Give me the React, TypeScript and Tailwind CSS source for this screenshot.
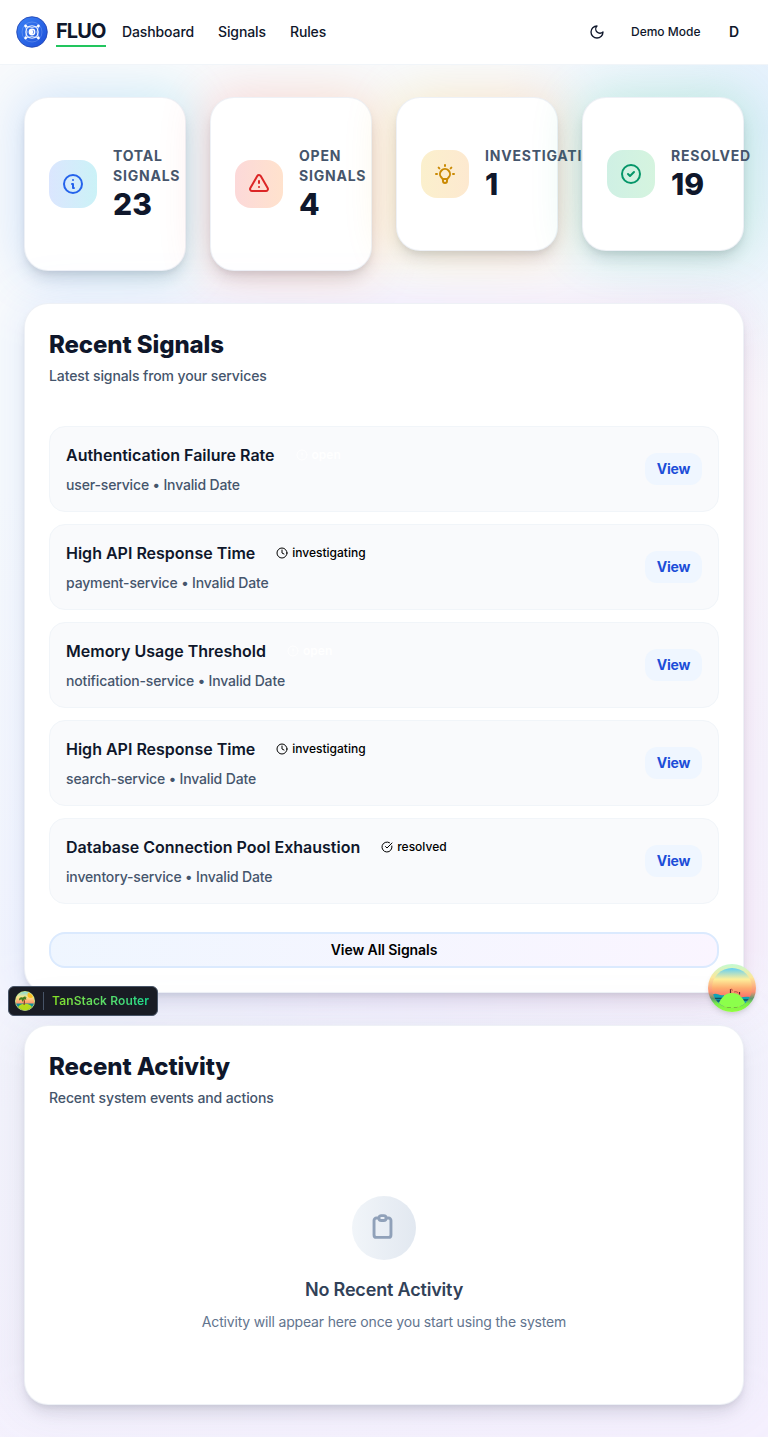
import React from "react";
import { Clock, CircleAlert, CircleCheckBig } from "lucide-react";

const stats = [
  {
    label: "Total Signals", value: "23", icon: "M13 16h-1v-4h-1m1-4h.01M21 12a9 9 0 11-18 0 9 9 0 0118 0z",
    color: "text-[#2563eb]", tile: "from-[#dbe6fe] to-[#cbf2f7]", glow: "from-[#3b82f6] to-[#06b6d4]",
  },
  {
    label: "Open Signals", value: "4", icon: "M12 9v2m0 4h.01m-6.938 4h13.856c1.54 0 2.502-1.667 1.732-3L13.732 4c-.77-1.333-2.694-1.333-3.464 0L3.34 16c-.77 1.333.192 3 1.732 3z",
    color: "text-[#dc2626]", tile: "from-[#fcd9d9] to-[#ffe2cd]", glow: "from-[#ef4444] to-[#f97316]",
  },
  {
    label: "Investigating", value: "1", icon: "M9.663 17h4.673M12 3v1m6.364 1.636l-.707.707M21 12h-1M4 12H3m3.343-5.657l-.707-.707m2.828 9.9a5 5 0 117.072 0l-.548.547A3.374 3.374 0 0014 18.469V19a2 2 0 11-4 0v-.531c0-.895-.356-1.754-.988-2.386l-.548-.547z",
    color: "text-[#ca8a04]", tile: "from-[#fbf0cd] to-[#fde9d0]", glow: "from-[#eab308] to-[#f97316]",
  },
  {
    label: "Resolved", value: "19", icon: "M9 12l2 2 4-4m6 2a9 9 0 11-18 0 9 9 0 0118 0z",
    color: "text-[#059669]", tile: "from-[#cff0e4] to-[#d5f4df]", glow: "from-[#10b981] to-[#22c55e]",
  },
];

const signals = [
  { title: "Authentication Failure Rate", status: "open", service: "user-service" },
  { title: "High API Response Time", status: "investigating", service: "payment-service" },
  { title: "Memory Usage Threshold", status: "open", service: "notification-service" },
  { title: "High API Response Time", status: "investigating", service: "search-service" },
  { title: "Database Connection Pool Exhaustion", status: "resolved", service: "inventory-service" },
];

const statusIcons = { open: CircleAlert, investigating: Clock, resolved: CircleCheckBig };

function Logo() {
  return (
    <svg className="size-8" viewBox="0 0 32 32" fill="none">
      <defs>
        <linearGradient id="logo" x1="0" y1="0" x2="1" y2="1">
          <stop stopColor="#3b82f6" />
          <stop offset="1" stopColor="#1d4ed8" />
        </linearGradient>
      </defs>
      <circle cx="16" cy="16" r="15.3" fill="url(#logo)" stroke="#1e40af" strokeWidth=".8" />
      <circle cx="16" cy="16" r="10" stroke="#fff" strokeOpacity=".3" strokeWidth=".6" />
      <circle cx="16" cy="16" r="6.3" stroke="#fff" strokeOpacity=".85" strokeWidth="1.1" />
      <path d="M9.5 10q6.5 3 13 0M9.5 22q6.5-3 13 0M9.5 10q3 6 0 12M22.5 10q-3 6 0 12" stroke="#fff" strokeOpacity=".75" strokeWidth="1" />
      <g fill="#fff">
        <circle cx="9.6" cy="10" r="1.4" /><circle cx="22.4" cy="10" r="1.4" />
        <circle cx="9.6" cy="22" r="1.4" /><circle cx="22.4" cy="22" r="1.4" />
        <circle cx="16" cy="16" r="3.4" />
      </g>
      <path d="M17 14.2a2.6 2.6 0 0 1 0 3.6 3 3 0 0 0 0-3.6" fill="#2563eb" stroke="#2563eb" strokeWidth=".4" />
    </svg>
  );
}

function SmallIsland() {
  return (
    <svg className="size-5" viewBox="0 0 20 20">
      <defs>
        <linearGradient id="sky" x1="0" y1="0" x2="0" y2="1">
          <stop stopColor="#6cd6e8" /><stop offset=".3" stopColor="#fde68a" /><stop offset=".7" stopColor="#fb7b62" />
        </linearGradient>
        <clipPath id="smallclip"><circle cx="10" cy="10" r="9.2" /></clipPath>
      </defs>
      <circle cx="10" cy="10" r="10" fill="#c9e88a" />
      <g clipPath="url(#smallclip)">
        <rect width="20" height="20" fill="url(#sky)" />
        <circle cx="15.5" cy="4" r="3" fill="#fbbf24" />
        <rect y="12.5" width="20" height="7.5" fill="#0e8f9b" />
        <ellipse cx="10" cy="17" rx="7" ry="4.2" fill="#b5d91c" />
        <path d="M8.8 7.5q1 3 .3 6.5" stroke="#8b3f24" strokeWidth="1.2" fill="none" />
        <path d="M4 9.5Q4 5.5 8 6.6 9.5 4.4 12 6.5l-1.5 0q1 1 .7 2.4L9.3 7.8 7.4 11 6.4 8.3Z" fill="#3f7d20" />
      </g>
    </svg>
  );
}

function LargeIsland() {
  return (
    <svg className="size-12" viewBox="0 0 48 48">
      <defs>
        <linearGradient id="ring" x1="0" y1="0" x2="0" y2="1">
          <stop stopColor="#c3fbd2" /><stop offset=".28" stopColor="#fce79a" /><stop offset=".58" stopColor="#fb8f72" />
          <stop offset=".72" stopColor="#5c9a70" /><stop offset=".83" stopColor="#78ef48" /><stop offset="1" stopColor="#91ff3d" />
        </linearGradient>
        <linearGradient id="dusk" x1="0" y1="0" x2="0" y2="1">
          <stop stopColor="#62cff5" /><stop offset=".28" stopColor="#fdef9b" /><stop offset=".5" stopColor="#fdae70" /><stop offset=".75" stopColor="#fb6d68" />
        </linearGradient>
        <clipPath id="bigclip"><circle cx="24" cy="24" r="20" /></clipPath>
      </defs>
      <circle cx="24" cy="24" r="24" fill="url(#ring)" />
      <g clipPath="url(#bigclip)">
        <rect x="4" y="4" width="40" height="40" fill="url(#dusk)" />
        <path d="M4 31q3-2 6-.7t6 .7v13H4zM32 34q4-2 12-1v11H32z" fill="#0ea5b5" />
        <path d="M4 34.5h12M5 37h10M33 36h11" stroke="#134e5e" strokeWidth="1.3" />
        <path d="M9 44c3-9 7-15 15-15s12 6 15 15z" fill="#8cff4b" />
        <path d="M12 41.8q12 4 24 0" stroke="#377e2b" strokeWidth=".6" strokeDasharray="4 3" fill="none" />
        <path d="M22.5 25v4M31.5 28v2.5" stroke="#5c2530" strokeWidth="1.2" />
        <path d="M22 26q1-2 3 .5M26 28q2-1 4 .5" stroke="#ad3f3f" strokeWidth=".8" fill="none" />
      </g>
    </svg>
  );
}

function Panel({ title, subtitle, className, glow, children }: { title: string; subtitle: string; className: string; glow: string; children: React.ReactNode }) {
  return (
    <section className={className + " relative"}>
      <div className={"absolute -inset-1 rounded-3xl bg-linear-to-r blur-xl " + glow} />
      <div className="relative h-full rounded-3xl border border-slate-200/60 bg-white p-6 shadow-[0_10px_15px_-3px_rgba(15,23,42,.1),0_4px_6px_-2px_rgba(15,23,42,.08)]">
        <h2 className="pt-px text-2xl leading-8 font-extrabold tracking-[-0.004em] text-slate-900">{title}</h2>
        <p className="mt-[5px] text-sm leading-5 font-medium tracking-[-0.008em] text-slate-600">{subtitle}</p>
        {children}
      </div>
    </section>
  );
}

export default function App() {
  return (
    <div className="relative h-[1437px] w-full overflow-hidden bg-[radial-gradient(circle_at_100%_130px,#e1effd_0px,transparent_270px),linear-gradient(165deg,#f8fafc_0%,#f8fafc_30%,#f4f5fd_60%,#f5f0fe_100%)] font-['Inter',sans-serif] text-slate-900">
      <header className="relative z-10 flex h-[65px] items-center border-b border-slate-100 bg-white pr-[29px] pl-4">
        <Logo />
        <div className="ml-2 w-[50px] border-b-2 border-[#22c55e] text-xl leading-7 font-bold tracking-[-0.045em]">FLUO</div>
        <nav className="ml-4 flex gap-6 text-sm font-medium tracking-[-0.008em]">
          <a>Dashboard</a>
          <a>Signals</a>
          <a>Rules</a>
        </nav>
        <div className="ml-auto flex items-center">
          <svg className="size-4" viewBox="0 0 24 24" fill="none" stroke="currentColor" strokeWidth="2" strokeLinecap="round" strokeLinejoin="round">
            <path d="M12 3a6 6 0 0 0 9 9 9 9 0 1 1-9-9Z" />
          </svg>
          <span className="ml-[26px] w-[69px] text-xs font-medium whitespace-nowrap">Demo Mode</span>
          <span className="ml-[29px] w-2.5 text-sm font-semibold">D</span>
        </div>
      </header>

      <main className="px-6 pt-8">
        <div className="grid grid-cols-4 items-start gap-6">
          {stats.map((s) => (
            <div key={s.label} className="relative">
              <div className={"absolute -inset-1 rounded-3xl bg-linear-to-r opacity-20 blur-xl " + s.glow} />
              <div className="relative flex items-center gap-4 rounded-3xl border border-slate-200/60 bg-white px-6 py-12 shadow-[0_10px_15px_-3px_rgba(15,23,42,.12),0_4px_6px_-2px_rgba(15,23,42,.08)]">
                <div className={"flex size-12 shrink-0 items-center justify-center rounded-2xl bg-linear-to-r " + s.tile + " " + s.color}>
                  <svg className="size-6" viewBox="0 0 24 24" fill="none" stroke="currentColor" strokeWidth="2" strokeLinecap="round" strokeLinejoin="round">
                    <path d={s.icon} />
                  </svg>
                </div>
                <div className="min-w-0">
                  <p className="text-sm leading-5 font-bold tracking-[0.056em] text-slate-600 uppercase">{s.label}</p>
                  <p className="text-3xl leading-9 font-extrabold">{s.value}</p>
                </div>
              </div>
            </div>
          ))}
        </div>

        <Panel title="Recent Signals" subtitle="Latest signals from your services" className="mt-8 h-[690px]" glow="from-blue-500/10 via-purple-500/10 to-pink-500/10">
          <div className="mt-10 flex flex-col gap-3">
            {signals.map((s, i) => {
              const Icon = statusIcons[s.status as keyof typeof statusIcons];
              return (
                <div key={i} className="flex h-[86px] items-center justify-between rounded-2xl border border-slate-100 bg-[#f9fafc] px-4">
                  <div>
                    <div className="flex items-center gap-3">
                      <h3 className="text-base leading-6 font-semibold">{s.title}</h3>
                      <span className={"flex items-center gap-1 px-[9px] text-xs " + (s.status === "open" ? "font-semibold text-white" : "font-medium text-black")}>
                        <Icon className="size-3" />
                        {s.status}
                      </span>
                    </div>
                    <p className="mt-2 text-sm leading-5 font-medium tracking-[-0.011em] text-slate-600">{s.service} • Invalid Date</p>
                  </div>
                  <button className="h-8 w-[57px] rounded-xl bg-blue-50 text-sm font-bold tracking-[-0.01em] text-[#1d4ed8]">View</button>
                </div>
              );
            })}
          </div>
          <button className="mt-7 h-9 w-full rounded-2xl border-2 border-blue-100 bg-linear-to-r from-blue-50 to-purple-50 text-sm font-semibold tracking-[-0.005em] text-black">View All Signals</button>
        </Panel>

        <Panel title="Recent Activity" subtitle="Recent system events and actions" className="mt-8 h-[380px]" glow="from-slate-500/10 to-slate-400/10">
          <div className="mt-[88px] flex flex-col items-center">
            <div className="flex size-16 items-center justify-center rounded-full bg-linear-to-r from-slate-100 to-slate-200 pr-[3px] pb-[3px] text-slate-400">
              <svg className="size-[29px]" viewBox="0 0 24 24" fill="none" stroke="currentColor" strokeWidth="2.4" strokeLinecap="round" strokeLinejoin="round">
                <path d="M9 5H7a2 2 0 00-2 2v12a2 2 0 002 2h10a2 2 0 002-2V7a2 2 0 00-2-2h-2M9 5a2 2 0 002 2h2a2 2 0 002-2M9 5a2 2 0 012-2h2a2 2 0 012 2" />
              </svg>
            </div>
            <h3 className="mt-4 text-lg leading-7 font-semibold tracking-[-0.01em] text-slate-700">No Recent Activity</h3>
            <p className="mt-2 text-sm leading-5 tracking-[-0.0125em] text-slate-500">Activity will appear here once you start using the system</p>
          </div>
        </Panel>
      </main>

      <button className="absolute top-[986px] left-2 flex h-[30px] w-[150px] items-center rounded-md border border-[#475467] bg-[#191c24] pl-1.5 text-xs font-semibold">
        <SmallIsland />
        <span className="ml-2 h-[18px] w-px bg-[#475467]" />
        <span className="ml-2 bg-linear-to-r from-[#84e11e] to-[#12d98a] bg-clip-text tracking-[0.01em] text-transparent">TanStack Router</span>
      </button>
      <button className="absolute top-[964px] right-3 size-12 rounded-full shadow-md">
        <LargeIsland />
      </button>
    </div>
  );
}
